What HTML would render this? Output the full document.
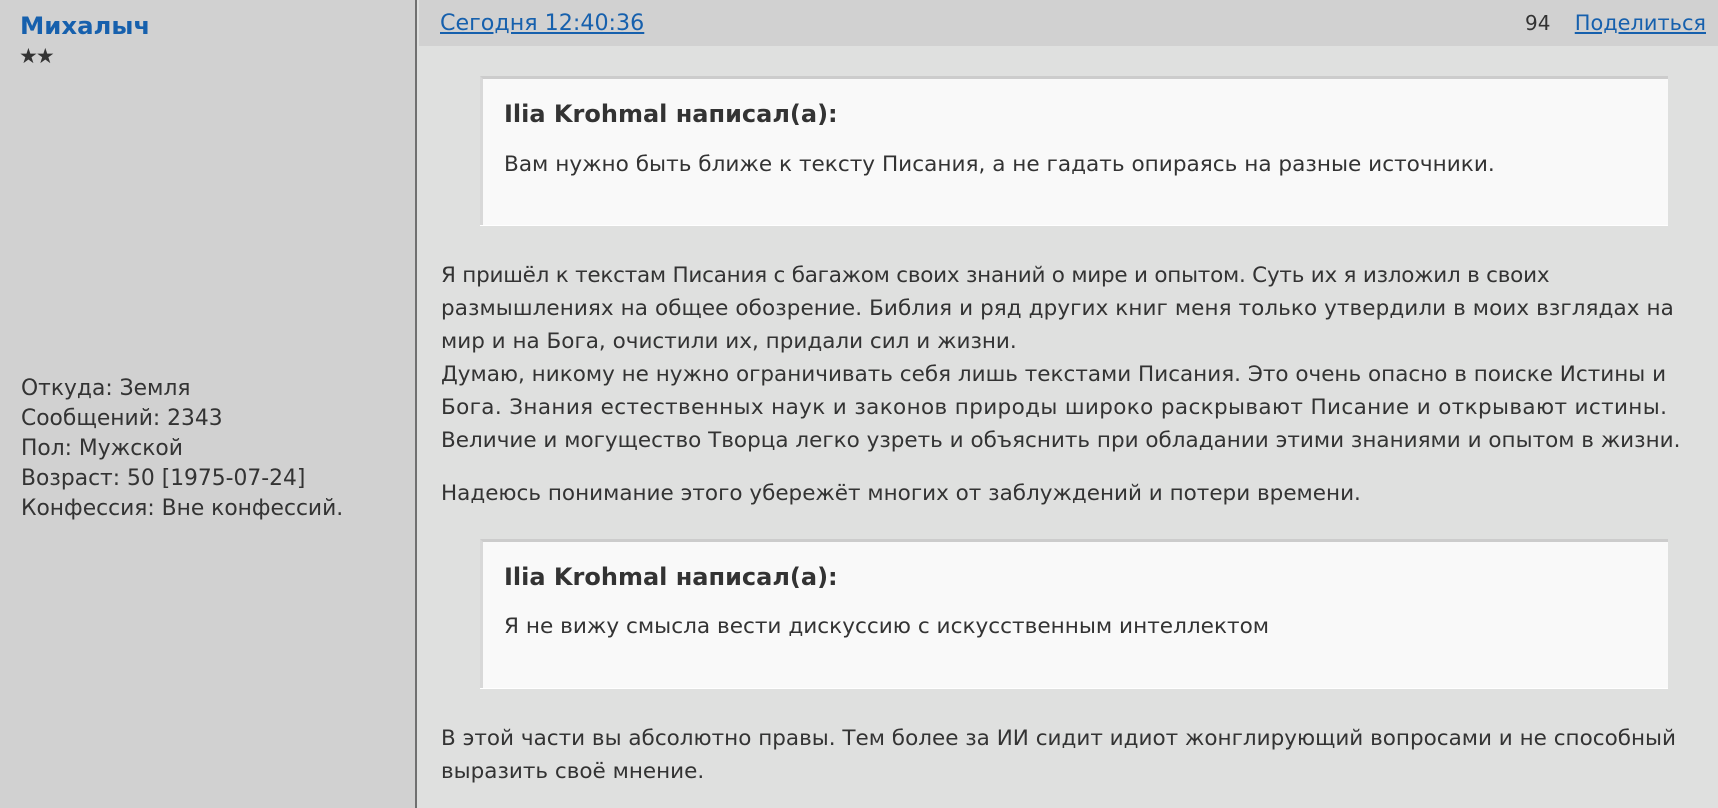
<!DOCTYPE html>
<html><head><meta charset="utf-8"><style>
*{margin:0;padding:0;box-sizing:border-box}
body{width:1718px;height:808px;overflow:hidden;background:#dfe0df;font-family:"DejaVu Sans","Liberation Sans",sans-serif;font-size:21.5px;color:#333;position:relative}
.side{position:absolute;left:0;top:0;width:417px;height:808px;background:#d1d1d1;border-right:2px solid #707070}
.name{position:absolute;left:20px;top:11px;font-weight:bold;font-size:24.4px;color:#1660ad}
.stars{position:absolute;left:19px;top:44px;font-size:21px;color:#333;letter-spacing:-2px}
.info{position:absolute;left:21px;top:374px;line-height:30px;font-size:21.8px}
.hdr{position:absolute;left:419px;top:0;right:0;height:46px;background:#d1d1d1}
a{color:#1660ad;text-decoration:underline}
.date{position:absolute;left:440px;top:10px;font-size:22.2px}
.num{position:absolute;left:1525px;top:11px;font-size:20px}
.share{position:absolute;right:12px;top:11px;font-size:20.9px}
.q{position:absolute;left:480px;width:1188px;background:#f9f9f9;border-top:3px solid #ccc;border-left:3px solid #d8d8d8;box-shadow:0 1px 0 #fff}
.q b{position:absolute;left:21px;font-size:24px;color:#333}
.q span{position:absolute;left:21px;white-space:nowrap;font-size:21.6px}
.t{position:absolute;left:441px;white-space:nowrap;line-height:33px}
</style></head><body>
<div class="side"></div>
<div class="name">Михалыч</div>
<div class="stars">★★</div>
<div class="info">Откуда: Земля<br>Сообщений: 2343<br>Пол: Мужской<br>Возраст: 50 [1975-07-24]<br>Конфессия: Вне конфессий.</div>
<div class="hdr"></div>
<a class="date">Сегодня 12:40:36</a>
<span class="num">94</span>
<a class="share">Поделиться</a>
<div class="q" style="top:76px;height:149px"><b style="top:21px">Ilia Krohmal написал(а):</b><span style="top:73px">Вам нужно быть ближе к тексту Писания, а не гадать опираясь на разные источники.</span></div>
<div class="t" style="top:259px"><div style="letter-spacing:-0.24px">Я пришёл к текстам Писания с багажом своих знаний о мире и опытом. Суть их я изложил в своих</div><div style="letter-spacing:0.08px">размышлениях на общее обозрение. Библия и ряд других книг меня только утвердили в моих взглядах на</div><div>мир и на Бога, очистили их, придали сил и жизни.</div><div>Думаю, никому не нужно ограничивать себя лишь текстами Писания. Это очень опасно в поиске Истины и</div><div style="letter-spacing:0.37px">Бога. Знания естественных наук и законов природы широко раскрывают Писание и открывают истины.</div><div>Величие и могущество Творца легко узреть и объяснить при обладании этими знаниями и опытом в жизни.</div></div>
<div class="t" style="top:477px">Надеюсь понимание этого убережёт многих от заблуждений и потери времени.</div>
<div class="q" style="top:539px;height:149px"><b style="top:21px">Ilia Krohmal написал(а):</b><span style="top:72px">Я не вижу смысла вести дискуссию с искусственным интеллектом</span></div>
<div class="t" style="top:722px">В этой части вы абсолютно правы. Тем более за ИИ сидит идиот жонглирующий вопросами и не способный<br>выразить своё мнение.</div>
</body></html>
